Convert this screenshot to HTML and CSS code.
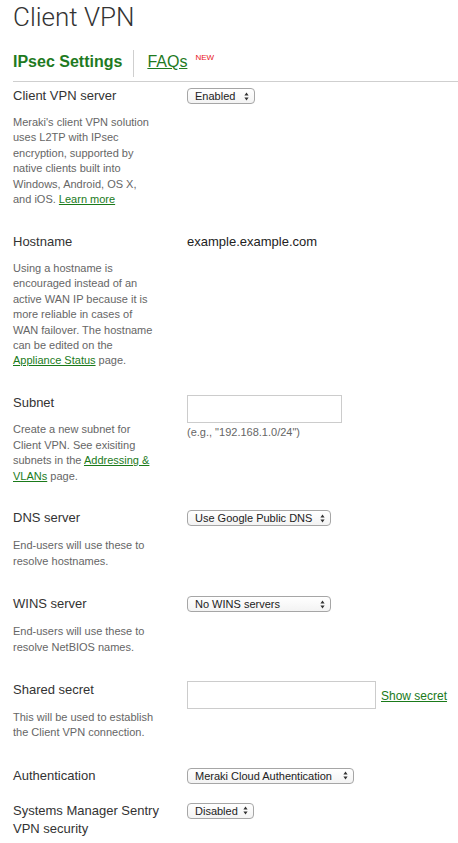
FILE: index.html
```html
<!DOCTYPE html>
<html>
<head>
<meta charset="utf-8">
<link rel="stylesheet" href="styles.css">
</head>
<body>
<div class="page">
  <h1 class="title">Client VPN</h1>
  <div class="tabs">
    <span class="tab active">IPsec Settings</span>
    <span class="tab-divider"></span>
    <a class="tab link-tab">FAQs</a>
    <span class="new">NEW</span>
  </div>

  <div class="row">
    <div class="left">
      <div class="label">Client VPN server</div>
      <div class="desc">Meraki's client VPN solution<br>uses L2TP with IPsec<br>encryption, supported by<br>native clients built into<br>Windows, Android, OS X,<br>and iOS. <a class="link">Learn more</a></div>
    </div>
    <div class="right">
      <div class="select w-enabled"><span>Enabled</span><svg class="arrows" width="5" height="9" viewBox="0 0 5 9"><path d="M2.5 0.5 L4.6 3.6 L0.4 3.6 Z M2.5 8.5 L4.6 5.4 L0.4 5.4 Z" fill="#333"/></svg></div>
    </div>
  </div>

  <div class="row">
    <div class="left">
      <div class="label">Hostname</div>
      <div class="desc">Using a hostname is<br>encouraged instead of an<br>active WAN IP because it is<br>more reliable in cases of<br>WAN failover. The hostname<br>can be edited on the<br><a class="link">Appliance Status</a> page.</div>
    </div>
    <div class="right">
      <div class="value">example.example.com</div>
    </div>
  </div>

  <div class="row">
    <div class="left">
      <div class="label">Subnet</div>
      <div class="desc">Create a new subnet for<br>Client VPN. See exisiting<br>subnets in the <a class="link">Addressing &amp;<br>VLANs</a> page.</div>
    </div>
    <div class="right">
      <div class="input w-subnet"></div>
      <div class="hint">(e.g., "192.168.1.0/24")</div>
    </div>
  </div>

  <div class="row short">
    <div class="left">
      <div class="label">DNS server</div>
      <div class="desc">End-users will use these to<br>resolve hostnames.</div>
    </div>
    <div class="right">
      <div class="select w-dns"><span>Use Google Public DNS</span><svg class="arrows" width="5" height="9" viewBox="0 0 5 9"><path d="M2.5 0.5 L4.6 3.6 L0.4 3.6 Z M2.5 8.5 L4.6 5.4 L0.4 5.4 Z" fill="#333"/></svg></div>
    </div>
  </div>

  <div class="row short">
    <div class="left">
      <div class="label">WINS server</div>
      <div class="desc">End-users will use these to<br>resolve NetBIOS names.</div>
    </div>
    <div class="right">
      <div class="select w-dns"><span>No WINS servers</span><svg class="arrows" width="5" height="9" viewBox="0 0 5 9"><path d="M2.5 0.5 L4.6 3.6 L0.4 3.6 Z M2.5 8.5 L4.6 5.4 L0.4 5.4 Z" fill="#333"/></svg></div>
    </div>
  </div>

  <div class="row short">
    <div class="left">
      <div class="label">Shared secret</div>
      <div class="desc">This will be used to establish<br>the Client VPN connection.</div>
    </div>
    <div class="right secret">
      <div class="input w-secret"></div>
      <a class="link show">Show secret</a>
    </div>
  </div>

  <div class="row tight">
    <div class="left">
      <div class="label">Authentication</div>
    </div>
    <div class="right">
      <div class="select w-auth"><span>Meraki Cloud Authentication</span><svg class="arrows" width="5" height="9" viewBox="0 0 5 9"><path d="M2.5 0.5 L4.6 3.6 L0.4 3.6 Z M2.5 8.5 L4.6 5.4 L0.4 5.4 Z" fill="#333"/></svg></div>
    </div>
  </div>

  <div class="row last">
    <div class="left">
      <div class="label">Systems Manager Sentry<br>VPN security</div>
    </div>
    <div class="right">
      <div class="select w-disabled"><span>Disabled</span><svg class="arrows" width="5" height="9" viewBox="0 0 5 9"><path d="M2.5 0.5 L4.6 3.6 L0.4 3.6 Z M2.5 8.5 L4.6 5.4 L0.4 5.4 Z" fill="#333"/></svg></div>
    </div>
  </div>
</div>
</body>
</html>
```

FILE: styles.css
```css
* { box-sizing: border-box; }
html, body { margin: 0; padding: 0; background: #fff; }
body {
  font-family: "Liberation Sans", Arial, sans-serif;
  color: #333;
}
.page {
  padding-left: 13px;
  width: 458px;
}
.title {
  margin: 0;
  padding-top: 2px;
  height: 50px;
  font-family: Roboto, "Liberation Sans", sans-serif;
  font-weight: 300;
  font-size: 26px;
  line-height: 30px;
  color: #333;
}
.tabs {
  display: flex;
  align-items: flex-start;
  border-bottom: 1px solid #cfcfcf;
  padding-bottom: 4px;
  margin-bottom: 5px;
}
.tab {
  font-size: 16px;
  line-height: 20px;
  margin-top: 2px;
  color: #1f7a1f;
}
.tab.active { font-weight: bold; }
.tab-divider {
  width: 1px;
  height: 27px;
  background: #cfcfcf;
  margin: 0 13px 0 11px;
}
.link-tab { text-decoration: underline; }
.new {
  color: #e8141b;
  font-size: 8px;
  line-height: 10px;
  margin-left: 8px;
  margin-top: 3px;
}
.row {
  display: grid;
  grid-template-columns: 174px 1fr;
  align-items: start;
  padding-bottom: 25.5px;
}
.row.short { padding-bottom: 26px; }
.row.short .desc { margin-top: 11px; }
.row.tight { padding-bottom: 17px; }
.row.last { padding-bottom: 0; }
.label {
  font-size: 13px;
  line-height: 18px;
  color: #333;
}
.desc {
  margin-top: 10px;
  font-size: 11px;
  line-height: 15.4px;
  color: #666;
  white-space: nowrap;
}
.link {
  color: #1a7a1a;
  text-decoration: underline;
}
.right { padding-top: 1px; }
.value {
  font-size: 13px;
  line-height: 18px;
  margin-top: -1px;
  color: #222;
}
.select {
  display: flex;
  align-items: center;
  justify-content: space-between;
  height: 16px;
  border: 1px solid #a6a6a6;
  border-radius: 4px;
  background: linear-gradient(#ffffff, #f3f3f3);
  padding: 0 5px 0 7px;
  font-size: 11px;
  color: #222;
  line-height: 14px;
}
.arrows { flex: none; }
.w-enabled { width: 68px; }
.w-dns { width: 144px; }
.w-auth { width: 167px; }
.w-disabled { width: 67px; }
.input {
  height: 28px;
  border: 1px solid #cccccc;
  background: #fff;
}
.w-subnet { width: 155px; }
.w-secret { width: 189px; }
.hint {
  font-size: 11px;
  line-height: 14px;
  margin-top: 2px;
  color: #666;
}
.secret {
  display: flex;
  align-items: center;
  gap: 5px;
  padding-top: 0;
}
.show {
  font-size: 12px;
  line-height: 14px;
  padding-top: 2px;
}
```
